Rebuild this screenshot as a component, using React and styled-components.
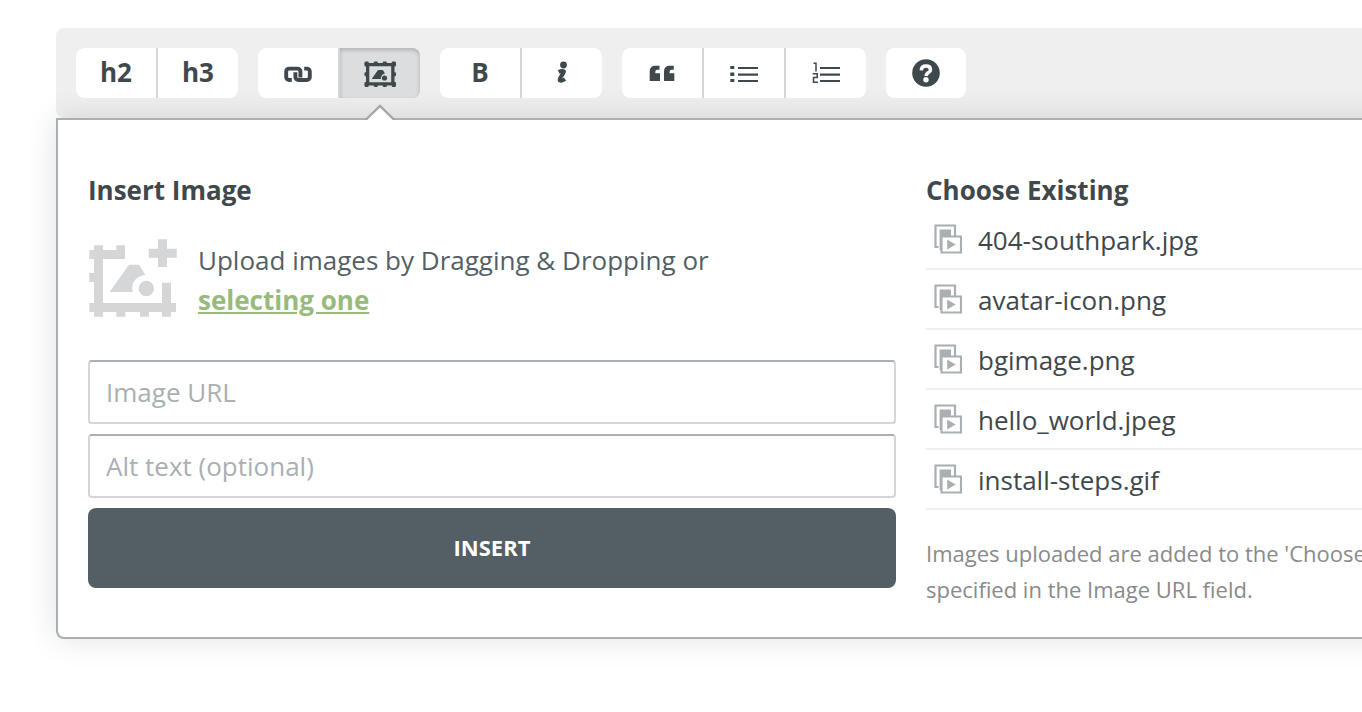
import React from "react";
import styled, { createGlobalStyle } from "styled-components";

const GlobalStyle = createGlobalStyle`
  * { box-sizing: border-box; }
  body {
    margin: 0;
    background: #fff;
    color: #3f484c;
    font-family: "Open Sans", "Noto Sans", sans-serif;
    font-size: 26px;
    line-height: 40px;
  }
  button, input { font: inherit; color: inherit; }
  ul { list-style: none; margin: 0; padding: 0; }
`;

const Editor = styled.main`
  padding: 28px 0 72px 56px;
  overflow: hidden;
`;

const Toolbar = styled.div`
  display: flex;
  flex-wrap: wrap;
  gap: 20px;
  padding: 20px;
  background: #efefef;
  border-radius: 8px 0 0 8px;
`;

const ButtonGroup = styled.div`
  display: flex;
  gap: 2px;
  background: #d4d6d7;
  border-radius: 8px;
`;

const ToolButton = styled.button`
  position: relative;
  display: flex;
  align-items: center;
  justify-content: center;
  width: 80px;
  height: 50px;
  padding: 0;
  border: 0;
  background: ${(p) => (p.$active ? "#dcdddf" : "#fff")};
  box-shadow: ${(p) => (p.$active ? "inset 0 2px 4px rgba(0, 0, 0, 0.2)" : "none")};
  font-weight: 700;
  cursor: pointer;

  &:first-child { border-radius: 8px 0 0 8px; }
  &:last-child { border-radius: 0 8px 8px 0; }
  &:only-child { border-radius: 8px; }
`;

const ToolLabel = styled.span`
  padding-bottom: 2px;
`;

const ToolIcon = styled.svg`
  display: block;
  width: 40px;
  height: 40px;
  fill: #3f484c;
`;

const Pointer = styled.svg`
  position: absolute;
  z-index: 1;
  top: 56px;
  left: 24px;
  width: 32px;
  height: 16px;
`;

/* The panel runs on past the window's right edge, so its shadow stays even there. */
const Panel = styled.section`
  display: grid;
  grid-template-columns: minmax(0, 202fr) minmax(0, 109fr);
  gap: 30px;
  margin-right: -40px;
  padding: 50px 40px 30px 30px;
  background: #fff;
  border: 2px solid #a9afb2;
  border-right: 0;
  border-radius: 0 0 0 8px;
  box-shadow: 0 0 32px rgba(0, 0, 0, 0.12);
`;

const Column = styled.div`
  min-width: 0;
`;

const Title = styled.h2`
  margin: 0;
  font-size: 26px;
  line-height: 40px;
  font-weight: 700;
`;

const Upload = styled.div`
  display: flex;
  gap: 20px;
  margin: 30px 0 40px;
  color: #545f65;
`;

const UploadIcon = styled.svg`
  flex: none;
  width: 90px;
  height: 80px;
  overflow: visible;
  fill: #d4d6d8;
`;

const UploadText = styled.p`
  margin: 0;
  max-width: 540px;
`;

const UploadLink = styled.a`
  color: #98ba7d;
  font-weight: 700;
`;

const Form = styled.form`
  display: grid;
  gap: 10px;
`;

const Field = styled.input`
  width: 100%;
  height: 64px;
  padding: 0 16px;
  background: #fff;
  border: 2px solid #d4d6d7;
  border-top-color: #a9afb2;
  border-radius: 4px;

  &::placeholder { color: #a9afb2; opacity: 1; }
`;

const InsertButton = styled.button`
  height: 80px;
  padding: 0 0 2px;
  border: 0;
  border-radius: 8px;
  background: #545f65;
  color: #fff;
  font-size: 22px;
  font-weight: 700;
  cursor: pointer;
`;

const FileRow = styled.li`
  display: flex;
  align-items: center;
  gap: 16px;
  height: 60px;
  padding-left: 8px;
  border-bottom: 2px solid #efefef;
`;

const FileLink = styled.a`
  padding-top: 2px;
  color: inherit;
  text-decoration: none;
`;

const FileIconSvg = styled.svg`
  flex: none;
  width: 28px;
  height: 30px;
`;

const Note = styled.p`
  margin: 25px 0 0;
  color: #8a8a8a;
  font-size: 22px;
  line-height: 36px;
  white-space: nowrap;
`;

const LinkGlyph = () => (
  <ToolIcon viewBox="0 0 40 40" aria-hidden="true">
    <g fill="none" stroke="#3f484c" strokeWidth="3.900">
      <path d="M13.800 27H11.200a3 3 0 0 1-3-3V18.600a3 3 0 0 1 3-3H19.400a3 3 0 0 1 3 3V24.500" />
      <path d="M26.200 15.600H28.800a3 3 0 0 1 3 3V24a3 3 0 0 1-3 3H20.400a3 3 0 0 1-3-3V19.200" />
    </g>
  </ToolIcon>
);

const ImageGlyph = () => (
  <ToolIcon viewBox="0 0 40 40" aria-hidden="true">
    <path fillRule="evenodd" d="M6 10H34.500V32.500H6ZM9.300 13.300V29.300H31.200V13.300Z" />
    {[4.7, 13.8, 22.8, 31.8].map((x) => (
      <React.Fragment key={x}>
        <rect x={x} y="8.600" width="4" height="3.500" rx="1" />
        <rect x={x} y="30.500" width="4" height="3.500" rx="1" />
      </React.Fragment>
    ))}
    {[9.5, 19.3, 29].map((y) => (
      <React.Fragment key={y}>
        <rect x="4.500" y={y} width="3.500" height="4" rx="1" />
        <rect x="32.500" y={y} width="3.500" height="4" rx="1" />
      </React.Fragment>
    ))}
    <path d="M11.700 26 18 17h4.800l2.200 3.600a5 5 0 0 0-4.200 5.400Z" />
    <circle cx="24.500" cy="25" r="2.600" />
  </ToolIcon>
);

const ItalicGlyph = () => (
  <ToolIcon viewBox="0 0 40 40" aria-hidden="true">
    <circle cx="21.500" cy="12" r="3.400" />
    <path
      d="M16.700 19q3.300-1.700 5.300-.600-.200 1.800-2.500 4.500-2 2.700-1.800 4.300 2 1.300 5.300-1.200"
      fill="none"
      stroke="#3f484c"
      strokeWidth="4"
      strokeLinejoin="round"
    />
  </ToolIcon>
);

const QuoteGlyph = () => (
  <ToolIcon viewBox="0 0 40 40" aria-hidden="true">
    <path d="M7.700 28V18.500Q7.700 12.700 13.500 12.700H17.500V16.700H15.200Q13.300 16.700 13.300 18.700V20.300H18V28Z" />
    <path d="M22 28V18.500Q22 12.700 27.800 12.700H31.800V16.700H29.500Q27.600 16.700 27.600 18.700V20.300H32.300V28Z" />
  </ToolIcon>
);

const ListGlyph = () => (
  <ToolIcon viewBox="0 0 40 40" aria-hidden="true">
    <path d="M6.300 13h4v3h-4zM6.300 19.600h4v3.300h-4zM6.300 26h4v3h-4z" />
    <path d="M14 14h20v2H14zM14 20.600h20v2.200H14zM14 27h20v2H14z" />
  </ToolIcon>
);

const OrderedGlyph = () => (
  <ToolIcon viewBox="0 0 40 40" aria-hidden="true">
    <path d="M14 14h20v2H14zM14 20.600h20v2.200H14zM14 27h20v2H14z" />
    <path
      d="M7.500 10.300H10V18.500M6.700 20.700H11.200V24.500H7.500V29.200H12"
      fill="none"
      stroke="#3f484c"
      strokeWidth="1.500"
    />
  </ToolIcon>
);

const HelpGlyph = () => (
  <ToolIcon viewBox="0 0 40 40" aria-hidden="true">
    <circle cx="20" cy="20" r="13.800" />
    <path
      d="M15.300 17.300Q15.500 13 20 13T24.500 16.700Q24.500 18.300 22.500 19.500 20.200 20.800 20.200 23"
      fill="none"
      stroke="#fff"
      strokeWidth="3.500"
    />
    <circle cx="20" cy="26.700" r="2.700" fill="#fff" />
  </ToolIcon>
);

const FileIcon = () => (
  <FileIconSvg viewBox="0 0 28 30" aria-hidden="true">
    <path d="M1.500 1.500H21V23H1.500Z" fill="#fff" stroke="#a9afb2" strokeWidth="2.200" />
    <path d="M4.500 5.500H7V28H4.500Z" fill="#fff" />
    <path d="M5.600 5.500H17V26H5.600Z" fill="#a9afb2" />
    <path d="M7.500 12.500H27V28.500H7.500Z" fill="#fff" stroke="#a9afb2" strokeWidth="2.200" />
    <path d="M13.200 15.500 21.700 20.500 13.200 25.500Z" fill="#a9afb2" />
  </FileIconSvg>
);

const files = [
  "404-southpark.jpg",
  "avatar-icon.png",
  "bgimage.png",
  "hello_world.jpeg",
  "install-steps.gif",
];

export default function App() {
  return (
    <>
      <GlobalStyle />
      <Editor>
        <Toolbar role="toolbar" aria-label="Formatting">
          <ButtonGroup>
            <ToolButton type="button"><ToolLabel>h2</ToolLabel></ToolButton>
            <ToolButton type="button"><ToolLabel>h3</ToolLabel></ToolButton>
          </ButtonGroup>
          <ButtonGroup>
            <ToolButton type="button" aria-label="Link"><LinkGlyph /></ToolButton>
            <ToolButton type="button" aria-label="Image" aria-pressed="true" $active>
              <ImageGlyph />
              <Pointer viewBox="0 0 32 16" aria-hidden="true">
                <path d="M1.500 16 16 1.500 30.500 16Z" fill="#fff" />
                <path d="M1 16.500 16 2 31 16.500" fill="none" stroke="#a2a8a9" strokeWidth="2.400" />
              </Pointer>
            </ToolButton>
          </ButtonGroup>
          <ButtonGroup>
            <ToolButton type="button" aria-label="Bold"><ToolLabel>B</ToolLabel></ToolButton>
            <ToolButton type="button" aria-label="Italic"><ItalicGlyph /></ToolButton>
          </ButtonGroup>
          <ButtonGroup>
            <ToolButton type="button" aria-label="Quote"><QuoteGlyph /></ToolButton>
            <ToolButton type="button" aria-label="Bulleted list"><ListGlyph /></ToolButton>
            <ToolButton type="button" aria-label="Numbered list"><OrderedGlyph /></ToolButton>
          </ButtonGroup>
          <ButtonGroup>
            <ToolButton type="button" aria-label="Help"><HelpGlyph /></ToolButton>
          </ButtonGroup>
        </Toolbar>
        <Panel>
          <Column>
            <Title>Insert Image</Title>
            <Upload>
              <UploadIcon viewBox="0 2 90 80" aria-hidden="true">
                <path d="M6 7.300H15V12H28.300V7.300H37V21H15V65H74V44.700H83V65H88V74H83V78.700H74V74H61V78.700H52V74H37.300V78.700H28.300V74H15V78.700H6V74H1.300V65H6V44H1.300V35H6V21H1.300V12H6Z" />
                <path d="M70 1.300H79V10.700H88.700V19.700H79V29H70V19.700H60.700V10.700H70Z" />
                <path d="M21.700 54 41 26.700H51L57.500 37.200A13 13 0 0 0 44.700 54Z" />
                <circle cx="58.300" cy="50.500" r="7.700" />
              </UploadIcon>
              <UploadText>
                Upload images by Dragging &amp; Dropping or{" "}
                <UploadLink href="#select">selecting one</UploadLink>
              </UploadText>
            </Upload>
            <Form onSubmit={(e) => e.preventDefault()}>
              <Field type="text" aria-label="Image URL" placeholder="Image URL" />
              <Field type="text" aria-label="Alt text" placeholder="Alt text (optional)" />
              <InsertButton type="submit">INSERT</InsertButton>
            </Form>
          </Column>
          <Column>
            <Title>Choose Existing</Title>
            <ul>
              {files.map((name) => (
                <FileRow key={name}>
                  <FileIcon />
                  <FileLink href={`#${name}`}>{name}</FileLink>
                </FileRow>
              ))}
            </ul>
            <Note>
              Images uploaded are added to the 'Choose
              <br />
              specified in the Image URL field.
            </Note>
          </Column>
        </Panel>
      </Editor>
    </>
  );
}
